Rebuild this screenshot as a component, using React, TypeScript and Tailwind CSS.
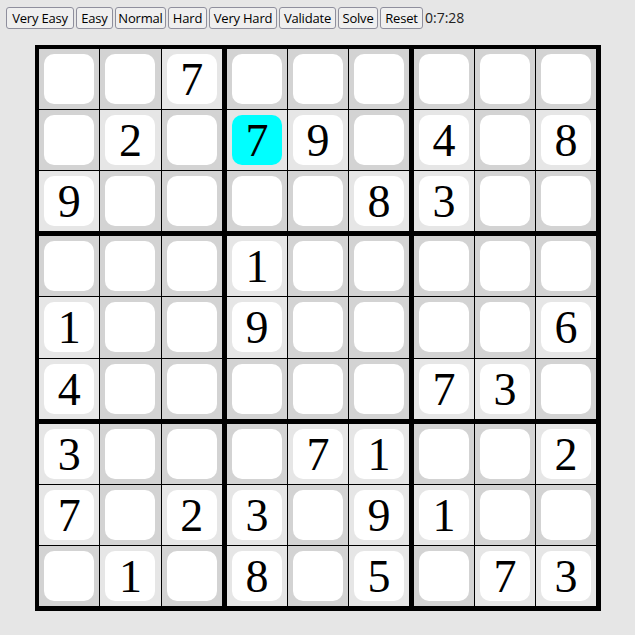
import React from 'react';

const PUZZLE = [
  '007000000',
  '020790408',
  '900008300',
  '000100000',
  '100900006',
  '400000730',
  '300071002',
  '702309100',
  '010805073',
];

const SELECTED = { row: 1, col: 3 };

const BUTTONS = [
  { label: 'Very Easy', width: 'w-[68px]' },
  { label: 'Easy', width: 'w-[37px]' },
  { label: 'Normal', width: 'w-[51px]' },
  { label: 'Hard', width: 'w-[39px]' },
  { label: 'Very Hard', width: 'w-[68px]' },
  { label: 'Validate', width: 'w-[57px]' },
  { label: 'Solve', width: 'w-[40px]' },
  { label: 'Reset', width: 'w-[43px]' },
];

const Cell = ({ row, col }: { row: number; col: number }) => {
  const value = PUZZLE[row][col];
  const filled = value !== '0';
  const selected = row === SELECTED.row && col === SELECTED.col;

  return (
    <div className={`flex items-center justify-center ${filled ? 'bg-[#e6e6e6]' : 'bg-[#d3d3d3]'}`}>
      <div
        className={`flex h-[50px] w-[50px] items-center justify-center rounded-[10px] pt-[2px] text-[46px] leading-none text-black ${
          selected ? 'bg-[#00ffff]' : 'bg-white'
        }`}
        style={{ fontFamily: '"Liberation Serif", "Times New Roman", serif' }}
      >
        {filled ? value : ''}
      </div>
    </div>
  );
};

const Box = ({ boxRow, boxCol }: { boxRow: number; boxCol: number }) => (
  <div className="grid grid-cols-3 grid-rows-3 gap-px bg-black">
    {[0, 1, 2].map((r) =>
      [0, 1, 2].map((c) => <Cell key={`${r}-${c}`} row={boxRow * 3 + r} col={boxCol * 3 + c} />),
    )}
  </div>
);

export default function App() {
  return (
    <div
      className="min-h-[635px] w-full bg-[#e6e6e6] pl-[6px] pt-[7px]"
      style={{ fontFamily: '"Open Sans", "Noto Sans", sans-serif' }}
    >
      <div className="flex items-center gap-[2px]">
        {BUTTONS.map((btn) => (
          <button
            key={btn.label}
            type="button"
            className={`${btn.width} h-[22px] rounded-[3px] border border-[#8f8f9d] bg-[#efefef] text-center text-[13px] leading-none tracking-[-0.2px] text-black whitespace-nowrap`}
          >
            {btn.label}
          </button>
        ))}
        <span className="text-[14px] leading-none text-[#222]">0:7:28</span>
      </div>

      <div className="mt-[16px] ml-[29px] grid w-[566px] grid-cols-[183px_182px_182px] grid-rows-[182px_183px_182px] gap-[5px] bg-black pb-[5px] pl-[4px] pr-[5px] pt-[4px]">
        {[0, 1, 2].map((br) =>
          [0, 1, 2].map((bc) => <Box key={`${br}-${bc}`} boxRow={br} boxCol={bc} />),
        )}
      </div>
    </div>
  );
}
